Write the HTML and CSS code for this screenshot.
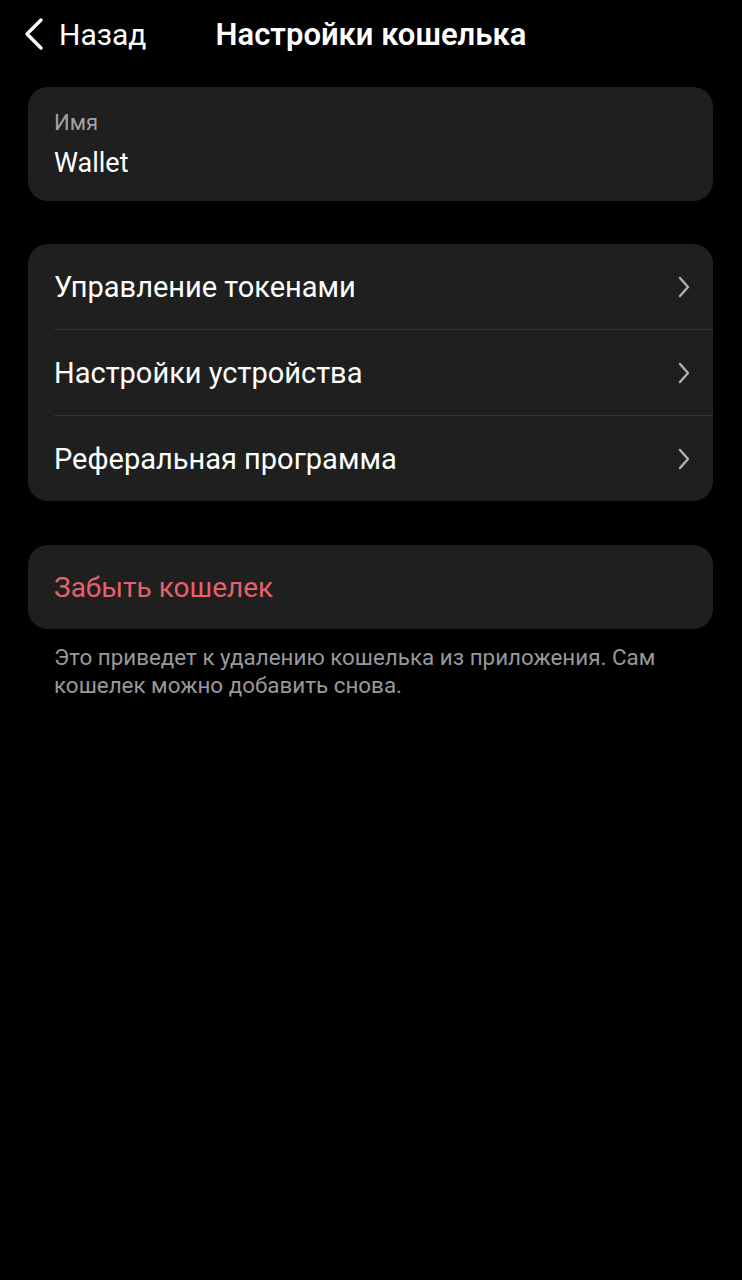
FILE: index.html
```html
<!DOCTYPE html>
<html lang="ru">
<head>
    <meta charset="UTF-8">
    <meta name="viewport" content="width=device-width, initial-scale=1.0">
    <title>Настройки кошелька</title>
    <link rel="stylesheet" href="styles.css">
</head>
<body>
    <div class="screen">
        <header class="nav-bar">
            <a class="back-link" href="#">
                <svg class="back-icon" width="24" height="34" viewBox="0 0 24 34">
                    <path d="M19 3 L5 17 L19 31" fill="none" stroke="#fff" stroke-width="3.4" stroke-linecap="round" stroke-linejoin="round"/>
                </svg>
                <span>Назад</span>
            </a>
            <h1 class="nav-title">Настройки кошелька</h1>
        </header>

        <div class="card name-card">
            <div class="field-label">Имя</div>
            <div class="field-value">Wallet</div>
        </div>

        <div class="card menu-card">
            <a class="menu-row" href="#">
                <span>Управление токенами</span>
                <svg class="chevron" width="14" height="22" viewBox="0 0 14 22">
                    <path d="M3 2 L11 11 L3 20" fill="none" stroke="#b0b0b4" stroke-width="2.4" stroke-linecap="round" stroke-linejoin="round"/>
                </svg>
            </a>
            <a class="menu-row" href="#">
                <span>Настройки устройства</span>
                <svg class="chevron" width="14" height="22" viewBox="0 0 14 22">
                    <path d="M3 2 L11 11 L3 20" fill="none" stroke="#b0b0b4" stroke-width="2.4" stroke-linecap="round" stroke-linejoin="round"/>
                </svg>
            </a>
            <a class="menu-row" href="#">
                <span>Реферальная программа</span>
                <svg class="chevron" width="14" height="22" viewBox="0 0 14 22">
                    <path d="M3 2 L11 11 L3 20" fill="none" stroke="#b0b0b4" stroke-width="2.4" stroke-linecap="round" stroke-linejoin="round"/>
                </svg>
            </a>
        </div>

        <button class="card danger-card">Забыть кошелек</button>
        <p class="hint">Это приведет к удалению кошелька из приложения. Сам кошелек можно добавить снова.</p>
    </div>
</body>
</html>
```

FILE: styles.css
```css
body {
    margin: 0;
    background-color: #000;
    color: #fff;
    font-family: Roboto, "Noto Sans", sans-serif;
}
.screen {
    padding: 0 29px 0 28px;
}
.nav-bar {
    display: grid;
    grid-template-columns: 1fr auto 1fr;
    align-items: center;
    height: 68px;
    margin: 0 -29px 0 -28px;
    padding: 0 22px;
}
.back-link {
    display: flex;
    align-items: center;
    gap: 13px;
    color: #fff;
    text-decoration: none;
    font-size: 30px;
}
.nav-title {
    margin: 0;
    font-size: 31px;
    font-weight: 600;
}
.card {
    background-color: #1f1f1f;
    border-radius: 20px;
}
.name-card {
    margin-top: 19px;
    height: 114px;
    box-sizing: border-box;
    padding: 21px 26px 0;
}
.field-label {
    font-size: 22px;
    color: #a2a2a6;
    line-height: 30px;
}
.field-value {
    font-size: 27px;
    line-height: 38px;
    margin-top: 6px;
}
.menu-card {
    margin-top: 43px;
}
.menu-row {
    display: flex;
    align-items: center;
    justify-content: space-between;
    height: 85px;
    margin-left: 26px;
    padding-right: 22px;
    color: #fff;
    text-decoration: none;
    font-size: 29px;
    border-top: 1px solid #333335;
}
.menu-row:first-child {
    border-top: none;
}
.danger-card {
    display: block;
    width: 100%;
    height: 84px;
    margin-top: 44px;
    padding: 0 26px;
    border: none;
    text-align: left;
    font-family: inherit;
    font-size: 28px;
    color: #e5616c;
}
.hint {
    margin: 14px 0 0;
    padding: 0 26px;
    font-size: 22.4px;
    line-height: 28px;
    color: #98989d;
}
```
